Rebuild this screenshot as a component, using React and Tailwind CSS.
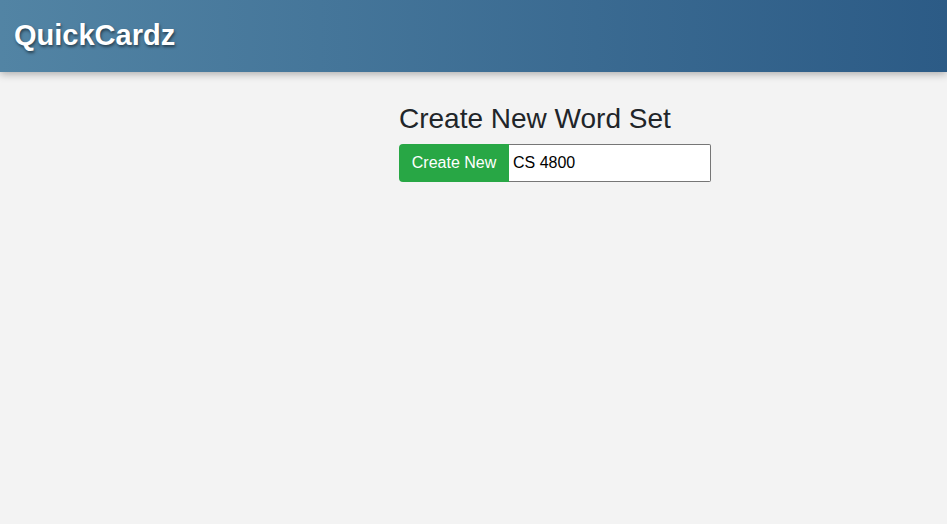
export default function App() {
  return (
    <div className="min-h-[524px] bg-[#f3f3f3]" style={{ fontFamily: '"Liberation Sans", Arial, sans-serif' }}>
      <header className="h-[72px] flex items-center px-[14px] bg-gradient-to-r from-[#5284a4] to-[#2c5b86] shadow-[0_2px_8px_rgba(0,0,0,0.3)]">
        <h1 className="text-white text-[29px] font-bold [text-shadow:1px_2px_3px_rgba(0,0,0,0.5)]">QuickCardz</h1>
      </header>
      <main className="pl-[399px] pt-[30px]">
        <h3 className="text-[28px] leading-[1.2] text-[#212529] mb-[8px]">Create New Word Set</h3>
        <div className="flex h-[38px] w-[312px]">
          <button className="bg-[#28a745] text-white text-[16px] px-[12px] rounded-l-[4px] w-[110px]">Create New</button>
          <input
            type="text"
            defaultValue="CS 4800"
            className="flex-1 min-w-0 bg-white border border-[#767676] border-l-0 rounded-r-[2px] px-[4px] text-[16px] text-black outline-none"
          />
        </div>
      </main>
    </div>
  )
}
